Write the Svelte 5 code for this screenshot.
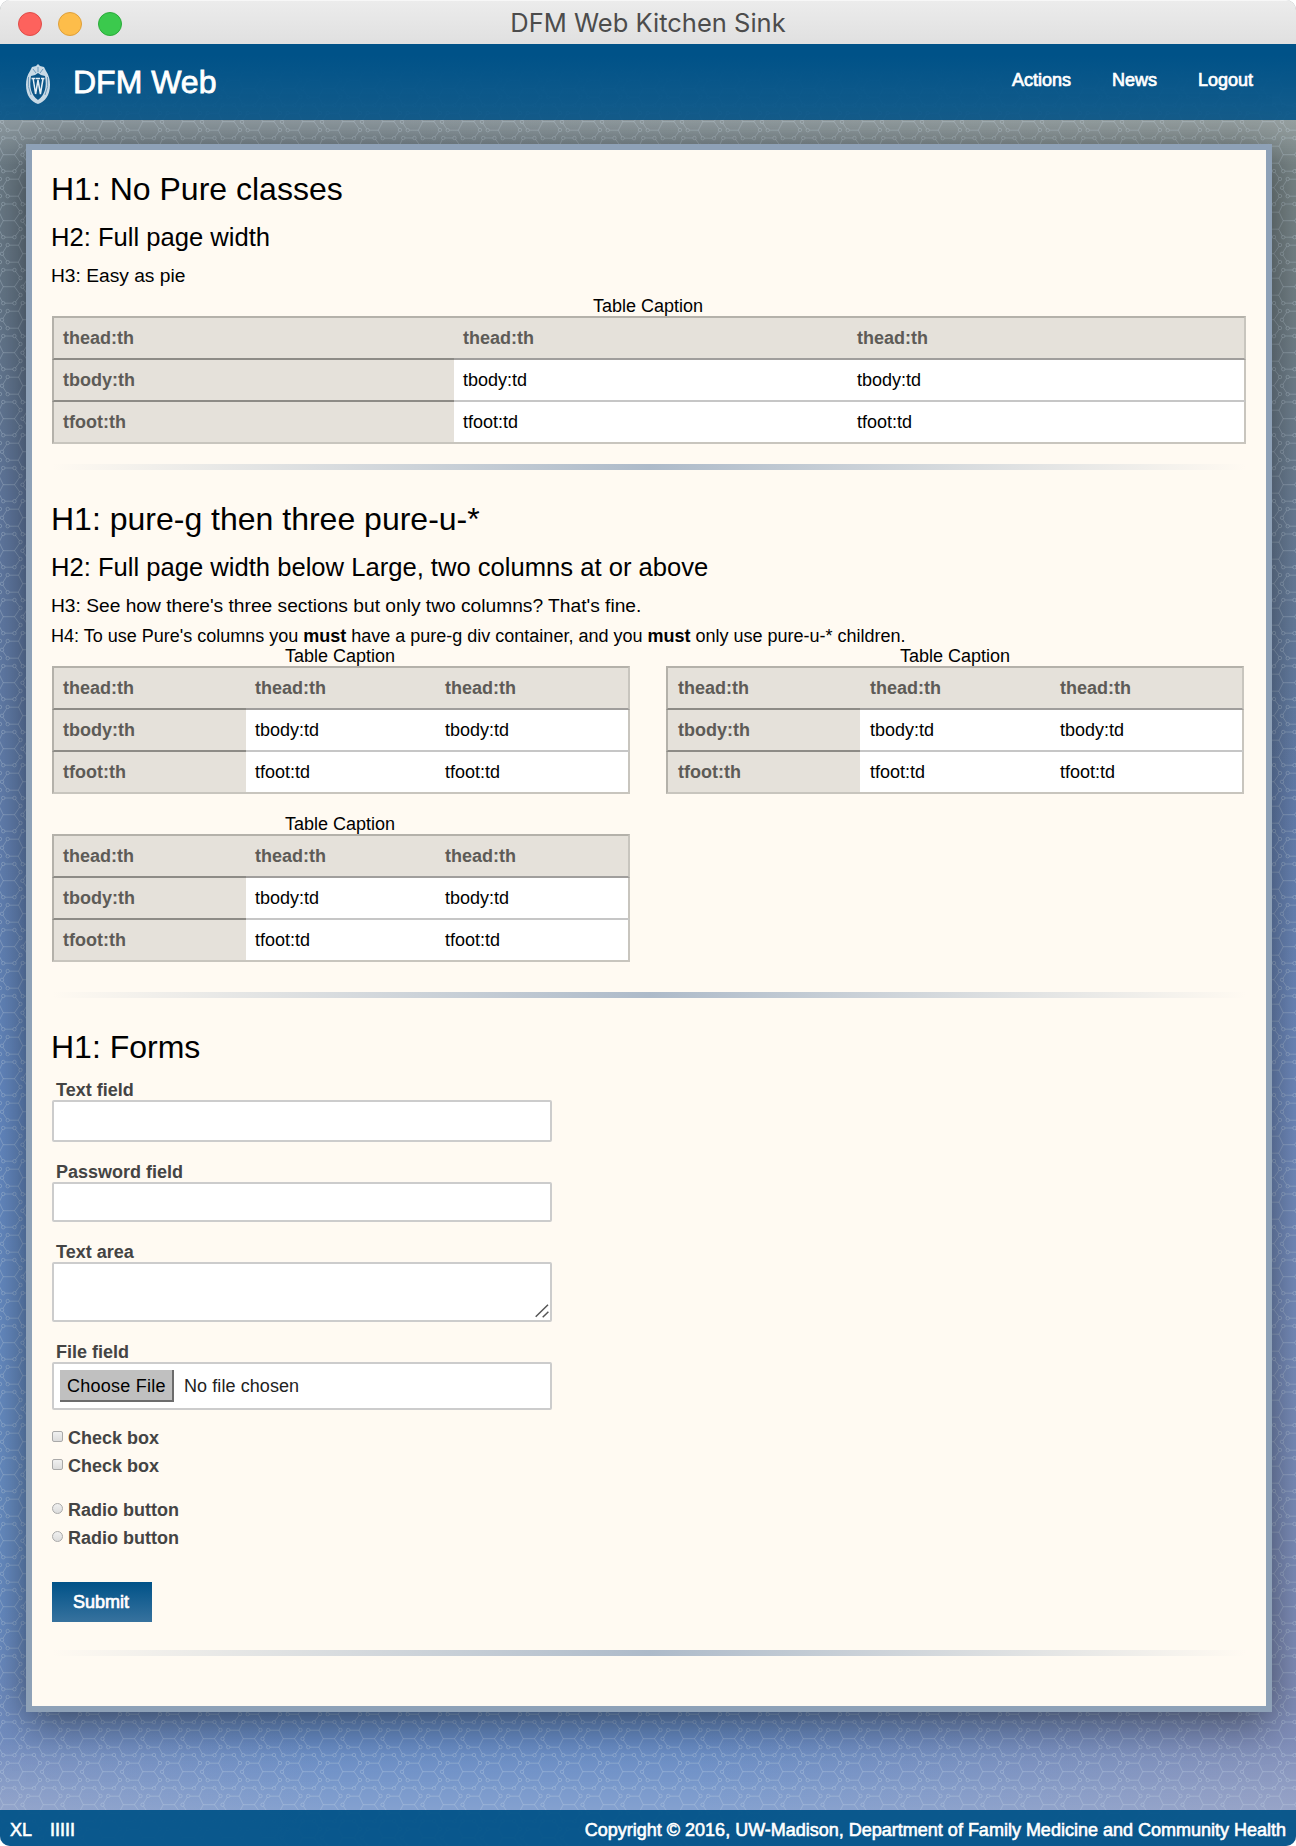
<script>
  const nav = ['Actions', 'News', 'Logout'];
  const fields = [
    { id: 'text', label: 'Text field' },
    { id: 'password', label: 'Password field' },
    { id: 'area', label: 'Text area' },
    { id: 'file', label: 'File field' }
  ];
  // outer vertices of one three-ring molecule
  const atoms = [
    [22.7, 39], [34, 39], [40, 47], [40, 64], [34, 72.2], [22.7, 72.2], [7.7, 64.2], [2, 55.8], [7.7, 47]
  ];
  const molecules = [];
  for (const dy of [-66, 0, 66]) {
    for (const dx of [-40, 0, 40]) {
      molecules.push([dx, dy], [dx - 19.5, dy + 33]);
    }
  }
</script>

{#snippet sample(wide)}
  <table class:wide>
    <caption>Table Caption</caption>
    <colgroup><col class="c1" /><col class="c2" /><col /></colgroup>
    <thead><tr><th>thead:th</th><th>thead:th</th><th>thead:th</th></tr></thead>
    <tbody><tr><th>tbody:th</th><td>tbody:td</td><td>tbody:td</td></tr></tbody>
    <tfoot><tr><th>tfoot:th</th><td>tfoot:td</td><td>tfoot:td</td></tr></tfoot>
  </table>
{/snippet}

<div class="window">
  <svg class="pattern" width="1296" height="1846" aria-hidden="true">
    <defs>
      <pattern id="hex" width="40" height="66" patternUnits="userSpaceOnUse">
        {#each molecules as [x, y]}
          <g transform="translate({x} {y})">
            <path d="M24.5 39H32.2M35 40.3L39 45.7M39 48.4L34 55.7H22.7L18.6 47.2L21.8 40.4M34 55.7L39 62.6M39 65.4L35 70.9M32.2 72.2H24.5M21.8 70.9L18.3 64.2L22.7 55.7M18.3 64.2H9.5M6.6 62.7L3 57.3M3 54.3L6.6 48.4M9.5 47.2H18.6" />
            {#each atoms as [cx, cy]}<circle {cx} {cy} r="1.7" />{/each}
          </g>
        {/each}
      </pattern>
    </defs>
    <rect width="1296" height="1846" fill="url(#hex)" />
  </svg>

  <div class="titlebar">
    <div class="lights"><i class="red"></i><i class="amber"></i><i class="green"></i></div>
    <span class="title">DFM Web Kitchen Sink</span>
  </div>

  <header>
    <svg class="crest" width="24" height="40" viewBox="0 0 24 40">
      <path d="M12 0L14 2L18 3L20 7C23 11 24 16 24 21C24 31 19 38 12 40C5 38 0 31 0 21C0 16 1 11 4 7L6 3L10 2Z" fill="#c9dae6" />
      <path d="M5 12Q9 12 12 9Q15 12 19 12C21 23 19 31 12 36C5 31 3 23 5 12Z" fill="#0d5688" />
      <path d="M7 5L10 9M17 5L14 9M12 3V8M2.5 13Q1 23 5 31M21.5 13Q23 23 19 31" fill="none" stroke="#6e9abb" stroke-width="1" />
      <path d="M5.5 14.5H9.5M10 14.5H14M15 14.5H18.5M7.2 15L9.6 30L12 16L14.4 30L17 15" fill="none" stroke="#e8f0f5" stroke-width="1.5" />
    </svg>
    <span class="brand">DFM Web</span>
    <nav>{#each nav as item}<span>{item}</span>{/each}</nav>
  </header>

  <main>
    <h1>H1: No Pure classes</h1>
    <h2>H2: Full page width</h2>
    <h3>H3: Easy as pie</h3>
    <div class="single">{@render sample(true)}</div>
    <hr class="first" />

    <h1>H1: pure-g then three pure-u-*</h1>
    <h2>H2: Full page width below Large, two columns at or above</h2>
    <h3>H3: See how there's three sections but only two columns? That's fine.</h3>
    <h4>H4: To use Pure's columns you <b>must</b> have a pure-g div container, and you <b>must</b> only use pure-u-* children.</h4>
    <div class="grid">
      {@render sample(false)}
      {@render sample(false)}
      {@render sample(false)}
    </div>
    <hr class="second" />

    <h1 class="forms">H1: Forms</h1>
    <form>
      {#each fields as field}
        <div class="field">
          <div class="label">{field.label}</div>
          <div class="box {field.id}">
            {#if field.id === 'area'}
              <svg class="grip" width="14" height="14" viewBox="0 0 14 14"><path d="M.7 12.8L13 .7M7.7 13.3L13.4 7.7" /></svg>
            {:else if field.id === 'file'}
              <span class="choose">Choose File</span><span class="none">No file chosen</span>
            {/if}
          </div>
        </div>
      {/each}
      <div class="options">
        <div class="option"><i></i>Check box</div>
        <div class="option"><i></i>Check box</div>
      </div>
      <div class="options round">
        <div class="option"><i></i>Radio button</div>
        <div class="option"><i></i>Radio button</div>
      </div>
      <div class="submit">Submit</div>
    </form>
    <hr class="third" />
  </main>

  <footer>
    <span class="size">XL</span><span class="bars">IIIII</span>
    <span class="copy">Copyright © 2016, UW-Madison, Department of Family Medicine and Community Health</span>
  </footer>
</div>

<style>
  :global(body) { margin: 0; background: #fff; }
  .window {
    position: relative;
    box-sizing: border-box;
    width: 1296px;
    height: 1846px;
    overflow: hidden;
    border-radius: 10px;
    display: flex;
    flex-direction: column;
    font: 18px/20px "Liberation Sans", Arial, sans-serif;
    color: #000;
    background:
      linear-gradient(to bottom, transparent 1740px, rgba(255, 255, 255, .2) 1812px),
      linear-gradient(to bottom, rgba(255, 255, 255, .22) 118px, transparent 165px),
      radial-gradient(ellipse 330px 200px at 0 1810px, rgba(134, 146, 186, .6), transparent),
      radial-gradient(ellipse 600px 1000px at 1296px 1700px, rgba(132, 143, 184, .9), transparent),
      radial-gradient(ellipse 900px 700px at 1296px 100px, rgba(124, 136, 136, .9), transparent),
      linear-gradient(to bottom, #717f85 100px, #66788a 300px, #6179a0 500px, #6380b0 800px, #6489c2 1100px, #688ec4 1500px, #668ac4 1800px);
  }
  .pattern { position: absolute; left: 0; top: 0; }
  .pattern path, .pattern circle { fill: none; stroke: #c9d9e4; stroke-opacity: .31; stroke-width: 1; }
  .titlebar {
    position: relative;
    box-sizing: border-box;
    height: 44px;
    flex: none;
    display: flex;
    align-items: center;
    justify-content: center;
    background: linear-gradient(#ececec, #e0e0e0);
    box-shadow: inset 0 1px 0 #f7f7f7;
  }
  .lights { position: absolute; left: 18px; top: 12px; display: flex; gap: 16px; }
  .lights i { box-sizing: border-box; width: 24px; height: 24px; border-radius: 50%; }
  .red { background: #fd625d; border: 1px solid #e04c48; }
  .amber { background: #fdbd4a; border: 1px solid #dfa03a; }
  .green { background: #3bc94d; border: 1px solid #2bab3a; }
  .title { font: 25.5px/44px Inter, sans-serif; color: #4c4c4c; padding-top: 2px; }
  header {
    position: relative;
    box-sizing: border-box;
    height: 76px;
    flex: none;
    display: flex;
    padding: 20px 43px 0 26px;
    color: #fff;
    background: linear-gradient(#005288 15%, rgba(0, 82, 136, .86));
  }
  .crest { flex: none; }
  .brand { margin-left: 23px; font-size: 32px; line-height: 37px; -webkit-text-stroke: .8px #fff; }
  nav { margin-left: auto; display: flex; gap: 41px; line-height: 32px; -webkit-text-stroke: .7px #fff; }
  main {
    position: relative;
    box-sizing: border-box;
    width: 1246px;
    height: 1568px;
    flex: none;
    margin: 24px 0 0 26px;
    padding: 20px 18px 0;
    border: 6px solid #8ea1b7;
    background: #fffaf2;
    box-shadow: 0 10px 40px rgba(0, 0, 0, .5);
  }
  h1, h2, h3, h4 { margin: 0 0 0 1px; font-weight: normal; white-space: nowrap; }
  h1 { font-size: 32px; line-height: 38px; }
  h2 { font-size: 25.6px; line-height: 32px; margin-top: 13px; }
  h3 { font-size: 19.2px; line-height: 24px; margin-top: 11px; }
  h4 { font-size: 18px; line-height: 20px; margin-top: 8px; }
  .single { margin: 8px 0 0 2px; width: 1194px; }
  .grid { margin-left: 2px; width: 1192px; display: grid; grid-template-columns: 578px 578px; justify-content: space-between; row-gap: 20px; }
  table { width: 100%; table-layout: fixed; border-collapse: separate; border-spacing: 0; }
  caption { height: 20px; padding: 0 2px 0 0; }
  .grid table:nth-child(2) caption { padding: 0; }
  .grid table:nth-child(2) :is(th, td) { padding-left: 10px; }
  .c1 { width: 194px; }
  .c2 { width: 190px; }
  .wide .c1 { width: 402px; }
  .wide .c2 { width: 394px; }
  th, td { box-sizing: border-box; height: 42px; padding: 0 0 0 9px; text-align: left; border-bottom: 2px solid #c6c6c6; }
  th { background: #e5e1da; color: #5d5b57; }
  td { background: #fff; }
  thead th { height: 44px; border-top: 2px solid #b4b1aa; border-bottom-color: #a09e9c; }
  tr th:first-child { border-left: 2px solid #b4b1aa; border-bottom-color: #8d8b86; }
  tr > :last-child { border-right: 2px solid #c8c5be; }
  tfoot tr th:first-child, tfoot td { border-bottom-color: #c8c5be; }
  hr { border: 0; height: 6px; margin: 0 2px; background: linear-gradient(to right, transparent, #adbac9, transparent); }
  .first { margin-top: 20px; margin-bottom: 30px; }
  .second { margin-top: 30px; margin-bottom: 30px; }
  .third { margin-top: 28px; }
  form { margin: 14px 0 0 2px; width: 500px; }
  .field { margin-bottom: 20px; }
  .label { padding-left: 4px; font-weight: bold; color: #444; }
  .box { position: relative; box-sizing: border-box; height: 42px; border: 2px solid #ccc; border-radius: 2px; background: #fff; }
  .password { height: 40px; }
  .area { height: 60px; }
  .file { height: 48px; padding: 6px; display: flex; }
  .grip { position: absolute; right: 1px; bottom: 2px; }
  .grip path { fill: none; stroke: #555; stroke-width: 1.5; }
  .choose { box-sizing: border-box; width: 114px; height: 32px; padding-left: 7px; line-height: 32px; letter-spacing: .25px; background: #c0c0c0; border-right: 2px solid #6c6c6c; border-bottom: 2px solid #6c6c6c; }
  .none { margin-left: 10px; line-height: 32px; letter-spacing: .08px; color: #222; }
  .options { margin-top: 14px; font-weight: bold; color: #444; line-height: 28px; }
  .field + .options { margin-top: -6px; }
  .round { margin-top: 16px; }
  .option { display: flex; }
  .option i { box-sizing: border-box; width: 11px; height: 11px; margin: 7px 5px 0 0; border: 1px solid #a9a9a9; border-radius: 2px; background: linear-gradient(#f0f0f0, #dcdcdc); }
  .round i { border-radius: 50%; }
  .submit { box-sizing: border-box; margin-top: 30px; width: 100px; height: 40px; padding-right: 2px; line-height: 40px; text-align: center; color: #fff; -webkit-text-stroke: .7px #fff; background: linear-gradient(#005288, #37729e); }
  footer {
    position: relative;
    box-sizing: border-box;
    height: 36px;
    flex: none;
    margin-top: auto;
    display: flex;
    padding: 0 10px;
    line-height: 40px;
    color: #fff;
    -webkit-text-stroke: .6px #fff;
    background: rgba(0, 82, 136, .93);
  }
  .bars { margin-left: 18px; }
  .copy { margin-left: auto; }
</style>
